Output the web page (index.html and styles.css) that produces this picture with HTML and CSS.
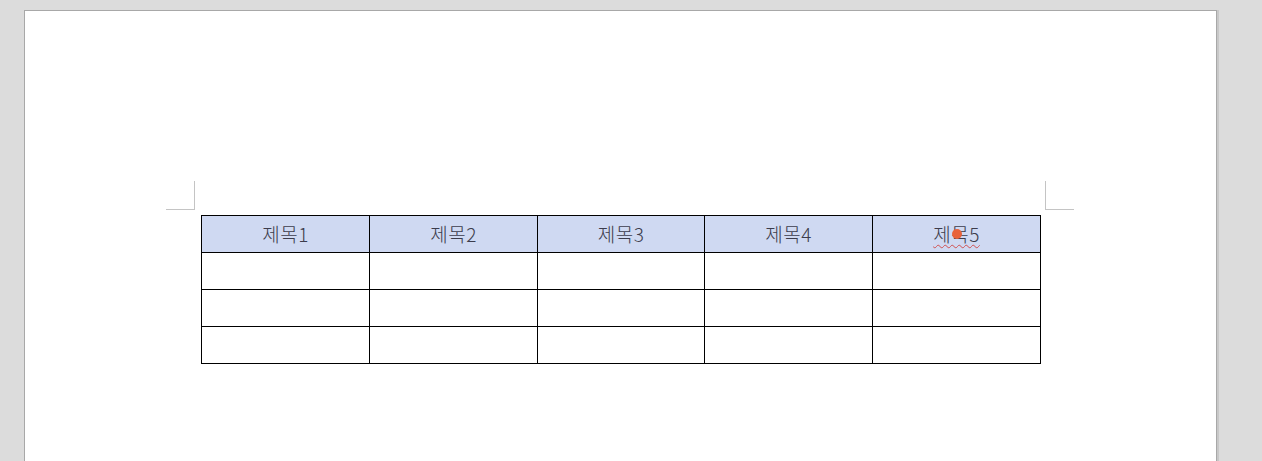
FILE: index.html
```html
<!DOCTYPE html>
<html lang="ko">
<head>
<meta charset="utf-8">
<link rel="stylesheet" href="styles.css">
</head>
<body>
<div class="page">
  <div class="marks">
    <div class="mark mark-left"></div>
    <div class="mark mark-right"></div>
  </div>
  <table class="doc-table">
    <colgroup>
      <col class="c168"><col class="c168"><col class="c167"><col class="c168"><col class="c168">
    </colgroup>
    <tr class="head">
      <td>제목1</td>
      <td>제목2</td>
      <td>제목3</td>
      <td>제목4</td>
      <td><span class="spell">제목5</span><span class="cursor-dot"></span></td>
    </tr>
    <tr><td></td><td></td><td></td><td></td><td></td></tr>
    <tr><td></td><td></td><td></td><td></td><td></td></tr>
    <tr><td></td><td></td><td></td><td></td><td></td></tr>
  </table>
</div>
</body>
</html>
```

FILE: styles.css
```css
html, body {
  margin: 0;
  padding: 0;
  height: 100%;
  overflow: hidden;
}
body {
  background: #dcdcdc;
  font-family: "Noto Sans CJK KR", "Noto Sans", sans-serif;
}
.page {
  box-sizing: border-box;
  margin: 10px 0 0 24px;
  width: 1193px;
  height: 460px;
  background: #ffffff;
  border: 1px solid #a8a8a8;
  border-bottom: none;
  padding-top: 170px;
  box-shadow: 2px 0 0 #c8c8c8;
}
.marks {
  display: flex;
  justify-content: space-between;
  margin-left: 141px;
  width: 908px;
}
.mark {
  width: 28px;
  height: 28px;
  border-bottom: 1px solid #c4c4c4;
}
.mark-left {
  border-right: 1px solid #c4c4c4;
}
.mark-right {
  border-left: 1px solid #c4c4c4;
}
.doc-table {
  margin: 5px 0 0 176px;
  border-collapse: collapse;
  table-layout: fixed;
  width: 840px;
}
.c168 { width: 168px; }
.c167 { width: 167px; }
.doc-table td {
  border: 1px solid #000000;
  height: 36px;
  padding: 0;
  text-align: center;
  vertical-align: middle;
  font-size: 19px;
  line-height: 20px;
  letter-spacing: 0.5px;
  font-weight: 300;
  color: #3c3c4c;
}
.head td {
  background: #cfd9f2;
  position: relative;
}
.spell {
  text-decoration: underline wavy #d05050;
  text-decoration-thickness: 1px;
  text-underline-offset: 2px;
}
.cursor-dot {
  position: absolute;
  left: 79px;
  top: 13px;
  width: 10px;
  height: 10px;
  border-radius: 50%;
  background: #e8623a;
}
```
